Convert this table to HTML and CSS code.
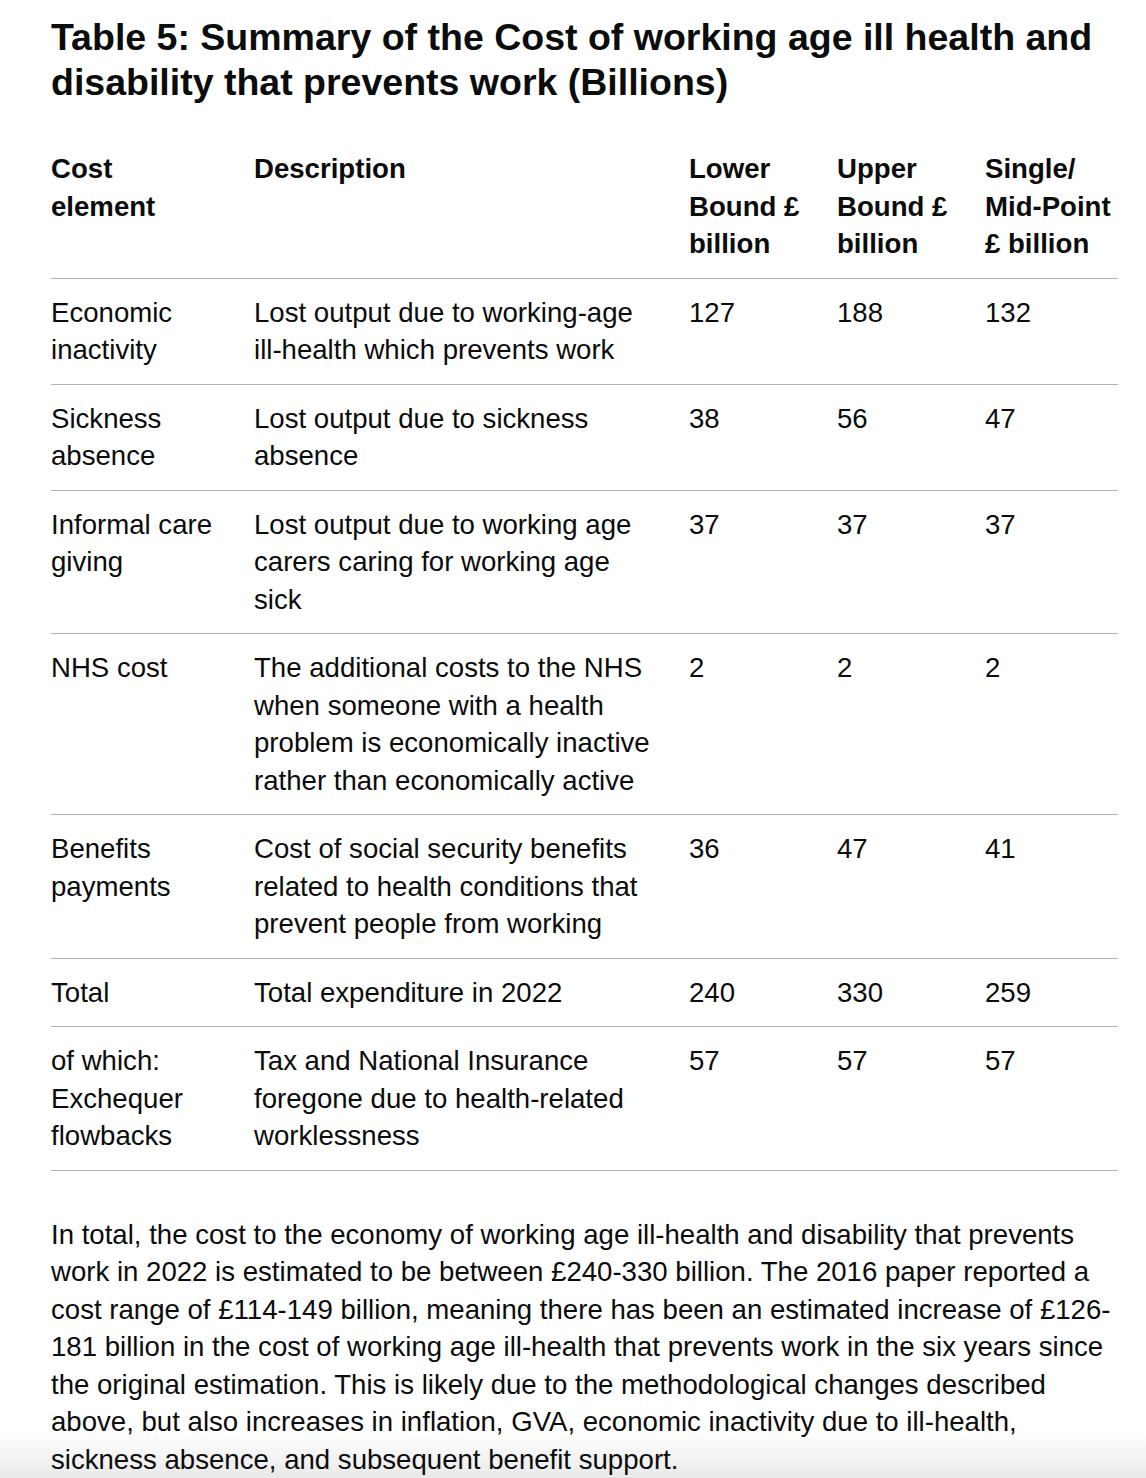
FILE: index.html
```html
<!DOCTYPE html>
<html lang="en">
<head>
<meta charset="utf-8">
<title>Table 5: Summary of the Cost of working age ill health and disability that prevents work</title>
<link rel="stylesheet" href="styles.css">
</head>
<body>
<main class="content">
  <h3 class="heading">Table 5: Summary of the Cost of working age ill health and disability that prevents work (Billions)</h3>
  <table class="cost-table">
    <colgroup>
      <col class="col-element">
      <col class="col-desc">
      <col class="col-num">
      <col class="col-num">
      <col>
    </colgroup>
    <thead>
      <tr>
        <th>Cost element</th>
        <th>Description</th>
        <th>Lower Bound £ billion</th>
        <th>Upper Bound £ billion</th>
        <th>Single/ Mid-Point £ billion</th>
      </tr>
    </thead>
    <tbody>
      <tr>
        <td>Economic inactivity</td>
        <td>Lost output due to working-age ill-health which prevents work</td>
        <td>127</td>
        <td>188</td>
        <td>132</td>
      </tr>
      <tr>
        <td>Sickness absence</td>
        <td>Lost output due to sickness absence</td>
        <td>38</td>
        <td>56</td>
        <td>47</td>
      </tr>
      <tr>
        <td>Informal care giving</td>
        <td>Lost output due to working age carers caring for working age sick</td>
        <td>37</td>
        <td>37</td>
        <td>37</td>
      </tr>
      <tr>
        <td>NHS cost</td>
        <td>The additional costs to the NHS when someone with a health problem is economically inactive rather than economically active</td>
        <td>2</td>
        <td>2</td>
        <td>2</td>
      </tr>
      <tr>
        <td>Benefits payments</td>
        <td>Cost of social security benefits related to health conditions that prevent people from working</td>
        <td>36</td>
        <td>47</td>
        <td>41</td>
      </tr>
      <tr>
        <td>Total</td>
        <td>Total expenditure in 2022</td>
        <td>240</td>
        <td>330</td>
        <td>259</td>
      </tr>
      <tr>
        <td>of which: Exchequer flowbacks</td>
        <td>Tax and National Insurance foregone due to health-related worklessness</td>
        <td>57</td>
        <td>57</td>
        <td>57</td>
      </tr>
    </tbody>
  </table>
  <p class="body-text">In total, the cost to the economy of working age ill-health and disability that prevents work in 2022 is estimated to be between £240-330 billion. The 2016 paper reported a cost range of £114-149 billion, meaning there has been an estimated increase of £126-181 billion in the cost of working age ill-health that prevents work in the six years since the original estimation. This is likely due to the methodological changes described above, but also increases in inflation, GVA, economic inactivity due to ill-health, sickness absence, and subsequent benefit support.</p>
</main>
</body>
</html>
```
FILE: styles.css
```css
html {
  margin: 0;
  padding: 0;
  min-height: 100%;
  background: linear-gradient(to bottom, #ffffff 0, #ffffff calc(100% - 46px), #e9e9e9 100%);
}

body {
  margin: 0;
  padding: 0;
  font-family: "Liberation Sans", Arial, sans-serif;
  color: #0b0c0c;
  font-size: 27.6px;
  line-height: 37.5px;
}

.content {
  width: 1067px;
  margin-left: 51px;
  padding-top: 15px;
}

.heading {
  margin: 0 0 30px;
  font-size: 37.5px;
  line-height: 45px;
  font-weight: 700;
}

.cost-table {
  width: 100%;
  table-layout: fixed;
  border-collapse: collapse;
  border-spacing: 0;
  margin: 0 0 45px;
}

.col-element { width: 203px; }
.col-desc { width: 435px; }
.col-num { width: 148px; }

.cost-table th,
.cost-table td {
  padding: 15px 30px 15px 0;
  text-align: left;
  vertical-align: top;
  border-bottom: 1px solid #b1b4b6;
}

.cost-table th {
  font-weight: 700;
}

.cost-table th:last-child,
.cost-table td:last-child {
  padding-right: 0;
}

.body-text {
  margin: 0;
}
```
